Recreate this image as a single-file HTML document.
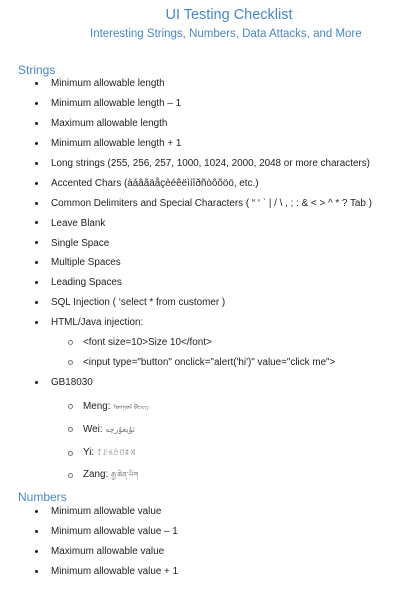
<!DOCTYPE html>
<html><head><meta charset="utf-8"><style>
body{margin:0;width:408px;height:596px;background:#fff;position:relative;overflow:hidden;font-family:"Liberation Sans","Noto Sans CJK SC",sans-serif;}
.a{position:absolute;white-space:nowrap;line-height:14px;}
.t{color:#4a86c8;}
.i{font-size:9.9px;color:#222;left:51px;}
.b{position:absolute;left:35px;width:3px;height:3px;border-radius:50%;background:#222;}
.s{font-size:9.9px;color:#222;left:83px;}
.c{position:absolute;left:68px;width:3px;height:3px;border:1px solid #777;border-radius:50%;}
.g{font-size:6px;color:#777;}
</style></head><body>
<div class="a t" style="left:0;width:458px;text-align:center;top:8px;font-size:14.5px;">UI Testing Checklist</div>
<div class="a t" style="left:90px;top:27px;font-size:11.5px;">Interesting Strings, Numbers, Data Attacks, and More</div>
<div class="a t" style="left:18px;top:63px;font-size:12px;">Strings</div>
<div class="b" style="top:82px"></div><div class="a i" style="top:77px">Minimum allowable length</div>
<div class="b" style="top:102px"></div><div class="a i" style="top:97px">Minimum allowable length – 1</div>
<div class="b" style="top:122px"></div><div class="a i" style="top:117px">Maximum allowable length</div>
<div class="b" style="top:142px"></div><div class="a i" style="top:137px">Minimum allowable length + 1</div>
<div class="b" style="top:162px"></div><div class="a i" style="top:157px">Long strings (255, 256, 257, 1000, 1024, 2000, 2048 or more characters)</div>
<div class="b" style="top:182px"></div><div class="a i" style="top:177px">Accented Chars (àáâãäåçèéêëìíîðñòôõöö, etc.)</div>
<div class="b" style="top:202px"></div><div class="a i" style="top:197px">Common Delimiters and Special Characters ( “ ‘ ` | / \ , ; : &amp; &lt; &gt; ^ * ? Tab )</div>
<div class="b" style="top:221px"></div><div class="a i" style="top:217px">Leave Blank</div>
<div class="b" style="top:241px"></div><div class="a i" style="top:237px">Single Space</div>
<div class="b" style="top:261px"></div><div class="a i" style="top:256px">Multiple Spaces</div>
<div class="b" style="top:281px"></div><div class="a i" style="top:276px">Leading Spaces</div>
<div class="b" style="top:301px"></div><div class="a i" style="top:296px">SQL Injection ( ‘select * from customer )</div>
<div class="b" style="top:321px"></div><div class="a i" style="top:316px">HTML/Java injection:</div>
<div class="c" style="top:340px"></div><div class="a s" style="top:336px">&lt;font size=10&gt;Size 10&lt;/font&gt;</div>
<div class="c" style="top:360px"></div><div class="a s" style="top:356px">&lt;input type="button" onclick="alert('hi')" value="click me"&gt;</div>
<div class="b" style="top:381px"></div><div class="a i" style="top:376px">GB18030</div>
<div class="c" style="top:404px"></div><div class="a s" style="top:400px">Meng: <span class="g">ᠮᠣᠩᠭᠣᠯ ᠪᠢᠴᠢᠭ</span></div>
<div class="c" style="top:427px"></div><div class="a s" style="top:423px">Wei: <span class="g" style="font-size:8px">ئۇيغۇرچە</span></div>
<div class="c" style="top:451px"></div><div class="a s" style="top:446px">Yi: <span class="g" style="font-size:7px">ꆈꌠꁱꂷꀀꐚꄉ</span></div>
<div class="c" style="top:473px"></div><div class="a s" style="top:468px">Zang: <span class="g" style="font-size:7px">རྒྱ་ཆེན་ཡིག</span></div>
<div class="a t" style="left:18px;top:490px;font-size:12px;">Numbers</div>
<div class="b" style="top:510px"></div><div class="a i" style="top:505px">Minimum allowable value</div>
<div class="b" style="top:530px"></div><div class="a i" style="top:525px">Minimum allowable value – 1</div>
<div class="b" style="top:550px"></div><div class="a i" style="top:545px">Maximum allowable value</div>
<div class="b" style="top:570px"></div><div class="a i" style="top:565px">Minimum allowable value + 1</div>
</body></html>
